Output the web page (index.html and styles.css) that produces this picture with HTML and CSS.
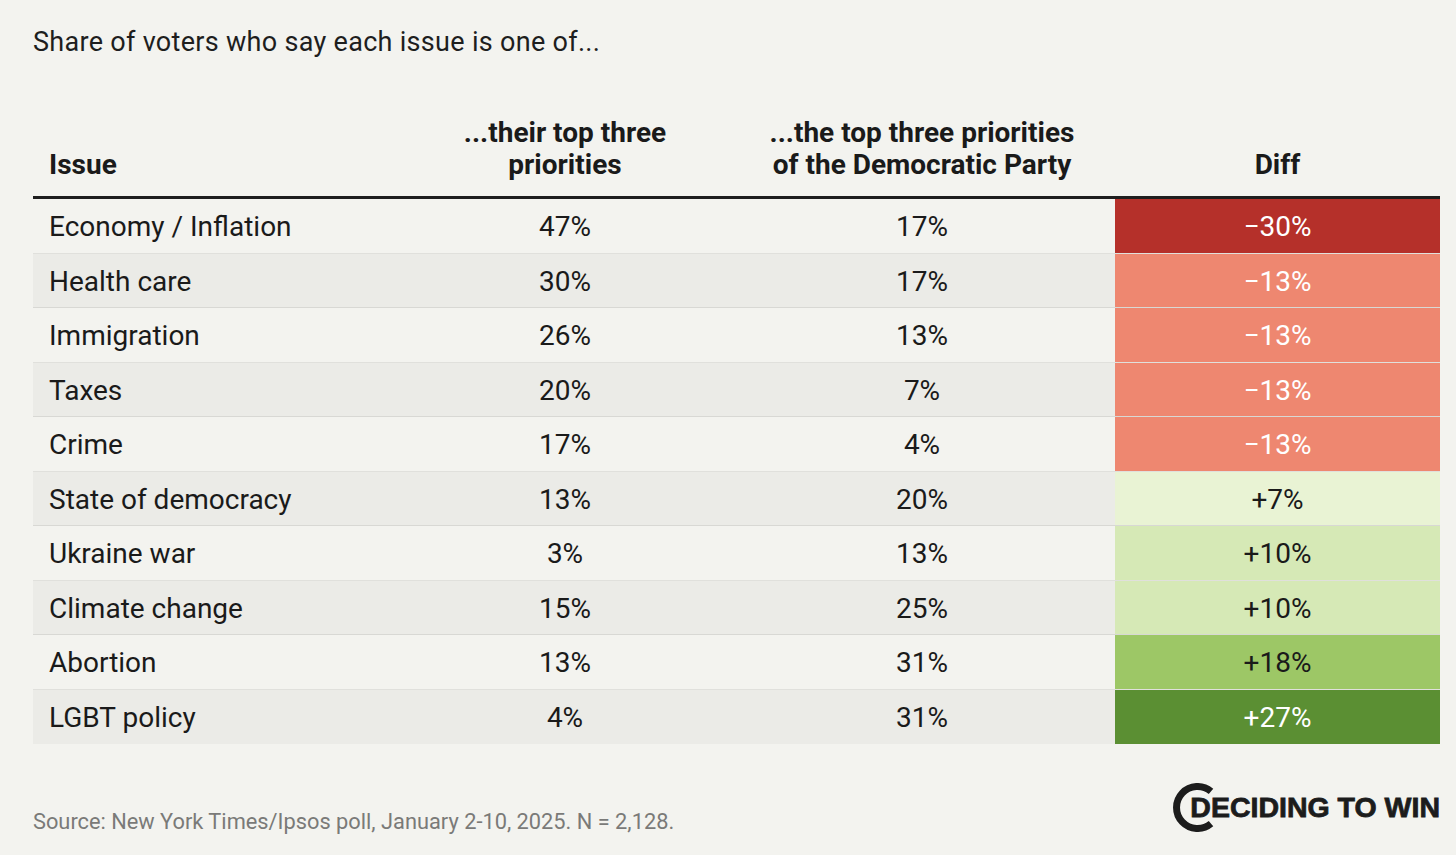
FILE: index.html
```html
<!DOCTYPE html>
<html lang="en">
<head>
<meta charset="utf-8">
<title>Share of voters</title>
<link rel="stylesheet" href="styles.css">
</head>
<body>
<main class="page">
  <h1 class="title">Share of voters who say each issue is one of...</h1>
  <div class="table">
    <div class="row head">
      <div class="cell issue">Issue</div>
      <div class="cell">...their top three<br>priorities</div>
      <div class="cell">...the top three priorities<br>of the Democratic Party</div>
      <div class="cell">Diff</div>
    </div>
    <div class="row"><div class="cell issue">Economy / Inflation</div><div class="cell">47%</div><div class="cell">17%</div><div class="cell diff d-30">−30%</div></div>
    <div class="row alt"><div class="cell issue">Health care</div><div class="cell">30%</div><div class="cell">17%</div><div class="cell diff d-13">−13%</div></div>
    <div class="row"><div class="cell issue">Immigration</div><div class="cell">26%</div><div class="cell">13%</div><div class="cell diff d-13">−13%</div></div>
    <div class="row alt"><div class="cell issue">Taxes</div><div class="cell">20%</div><div class="cell">7%</div><div class="cell diff d-13">−13%</div></div>
    <div class="row"><div class="cell issue">Crime</div><div class="cell">17%</div><div class="cell">4%</div><div class="cell diff d-13">−13%</div></div>
    <div class="row alt"><div class="cell issue">State of democracy</div><div class="cell">13%</div><div class="cell">20%</div><div class="cell diff d7">+7%</div></div>
    <div class="row"><div class="cell issue">Ukraine war</div><div class="cell">3%</div><div class="cell">13%</div><div class="cell diff d10">+10%</div></div>
    <div class="row alt"><div class="cell issue">Climate change</div><div class="cell">15%</div><div class="cell">25%</div><div class="cell diff d10">+10%</div></div>
    <div class="row"><div class="cell issue">Abortion</div><div class="cell">13%</div><div class="cell">31%</div><div class="cell diff d18">+18%</div></div>
    <div class="row alt last"><div class="cell issue">LGBT policy</div><div class="cell">4%</div><div class="cell">31%</div><div class="cell diff d27">+27%</div></div>
  </div>
  <footer class="footer">
    <p class="source">Source: New York Times/Ipsos poll, January 2-10, 2025. N = 2,128.</p>
    <div class="logo">
      <svg class="ring" width="49" height="49" viewBox="0 0 49 49" aria-hidden="true">
        <path d="M38 8.4 A21 21 0 1 0 38 40.6" fill="none" stroke="#1c1c1c" stroke-width="7"/>
      </svg>
      <span class="logo-text">DECIDING TO WIN</span>
    </div>
  </footer>
</main>
</body>
</html>
```

FILE: styles.css
```css
html, body {
  margin: 0;
  padding: 0;
  background: #f3f3ef;
}
body {
  font-family: Roboto, "Liberation Sans", sans-serif;
  color: #1a1a1a;
}
.page {
  width: 1407px;
  padding: 26px 16px 0 33px;
}
.title {
  margin: 0;
  font-size: 27px;
  font-weight: 400;
  line-height: 32px;
  letter-spacing: 0.3px;
  color: #1e1e1e;
}
.table {
  margin-top: 57px;
}
.row {
  display: grid;
  grid-template-columns: 368px 328px 386px 325px;
  height: 54.5px;
  box-sizing: border-box;
  border-bottom: 1px solid rgba(0, 0, 0, 0.08);
}
.row.alt {
  background: #ebebe7;
}
.row.last {
  border-bottom: none;
}
.row.head {
  height: 84px;
  border-bottom: 3px solid #1e1e1e;
  font-weight: 700;
  line-height: 32px;
}
.row.head .cell {
  align-items: flex-end;
  padding-bottom: 16px;
}
.cell {
  display: flex;
  align-items: center;
  justify-content: center;
  text-align: center;
  font-size: 28px;
  padding-top: 2px;
  box-sizing: border-box;
}
.cell.issue {
  justify-content: flex-start;
  text-align: left;
  padding-left: 16px;
}
.diff { color: #ffffff; }
.d-30 { background: #b5302a; }
.d-13 { background: #ee8770; }
.d7 { background: #e9f3d4; color: #1a1a1a; }
.d10 { background: #d6e9b6; color: #1a1a1a; }
.d18 { background: #9dc766; color: #1a1a1a; }
.d27 { background: #5b8f33; }
.footer {
  display: flex;
  justify-content: space-between;
  align-items: flex-start;
  margin-top: 39px;
}
.source {
  margin: 26px 0 0 0;
  font-size: 21.8px;
  line-height: 26px;
  color: #7a7a78;
}
.logo {
  display: flex;
  align-items: center;
}
.ring {
  display: block;
  margin-right: -32px;
}
.logo-text {
  font-family: "Liberation Sans", Arial, sans-serif;
  font-weight: 700;
  font-size: 28.5px;
  letter-spacing: 0;
  color: #1c1c1c;
  -webkit-text-stroke: 0.8px #1c1c1c;
}
```
